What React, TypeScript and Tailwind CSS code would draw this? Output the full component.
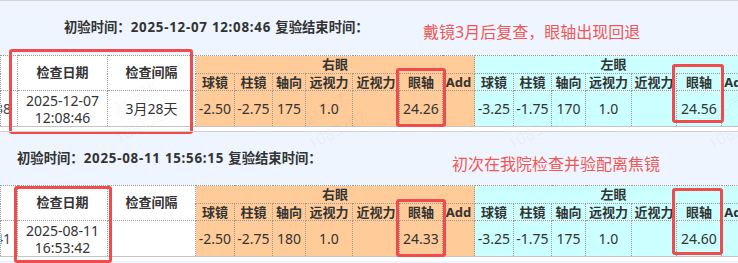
import React from "react";

// ============================================================================
// DATA
// ============================================================================

const colWidths = [
  "w-[17px]", "w-[90px]", "w-[88px]",
  "w-[39px]", "w-[38px]", "w-[33px]", "w-[47px]", "w-[47px]", "w-[43px]", "w-[32px]",
  "w-[39px]", "w-[38px]", "w-[34px]", "w-[46px]", "w-[45px]", "w-[45px]", "w-[31px]",
];

const subHeads = ["球镜", "柱镜", "轴向", "远视力", "近视力", "眼轴", "Add"];

type Visit = {
  start: string;
  date: [string, string];
  interval: string;
  prev: string;
  right: string[];
  left: string[];
  note: string;
  headClass: string;
  noteClass: string;
  boxes: string[];
  marks: { cls: string; text: string }[];
};

const visits: Visit[] = [
  {
    start: "2025-12-07 12:08:46",
    date: ["2025-12-07", "12:08:46"],
    interval: "3月28天",
    prev: "1138",
    right: ["-2.50", "-2.75", "175", "1.0", "", "24.26", ""],
    left: ["-3.25", "-1.75", "170", "1.0", "", "24.56", ""],
    note: "戴镜3月后复查，眼轴出现回退",
    headClass: "h-[54px] pl-[64px]",
    noteClass: "left-[423px] top-[22px]",
    boxes: [
      "left-[9px] top-[49px] w-[184px] h-[85px]",
      "left-[396px] top-[68px] w-[50px] h-[59px]",
      "left-[672px] top-[64px] w-[52px] h-[59px]",
    ],
    marks: [
      { cls: "left-[112px] top-[86px]", text: "赵雨涛" },
      { cls: "left-[112px] top-[112px]", text: "1083207" },
      { cls: "left-[303px] top-[96px]", text: "赵雨涛" },
      { cls: "left-[305px] top-[118px]", text: "1083207" },
      { cls: "left-[512px] top-[96px]", text: "赵雨涛" },
      { cls: "left-[505px] top-[118px]", text: "1083207" },
      { cls: "left-[712px] top-[92px]", text: "赵雨涛" },
      { cls: "left-[705px] top-[118px]", text: "1083207" },
    ],
  },
  {
    start: "2025-08-11 15:56:15",
    date: ["2025-08-11", "16:53:42"],
    interval: "",
    prev: "1141",
    right: ["-2.50", "-2.75", "180", "1.0", "", "24.33", ""],
    left: ["-3.25", "-1.75", "175", "1.0", "", "24.60", ""],
    note: "初次在我院检查并验配离焦镜",
    headClass: "h-[53px] pl-[17px]",
    noteClass: "left-[452px] top-[23px]",
    boxes: [
      "left-[14px] top-[55px] w-[98px] h-[77px]",
      "left-[396px] top-[68px] w-[50px] h-[58px]",
      "left-[672px] top-[57px] w-[51px] h-[67px]",
    ],
    marks: [],
  },
];

const cell = "border border-dotted border-[#9a9a9a] p-0 text-center align-middle";

// ============================================================================
// VISIT BLOCK — blue heading + eye table + annotations
// ============================================================================

function VisitBlock({ v }: { v: Visit }) {
  return (
    <div className="relative">
      <div className="h-px bg-[#d2d2d2]" />
      <div className={`flex items-center text-[13.33px] font-bold text-[#333] whitespace-nowrap ${v.headClass}`}>
        <span>
          初验时间：<span className="tracking-[0.75px]">{v.start} </span>复验结束时间：
        </span>
      </div>

      <table className="table-fixed border-collapse w-[752px] text-[#333] bg-white">
        <colgroup>
          {colWidths.map((w, i) => (
            <col key={i} className={w} />
          ))}
        </colgroup>
        <thead>
          <tr className="h-[18px]">
            <th rowSpan={2} className={cell} />
            <th rowSpan={2} className={`${cell} text-[13px] font-bold`}>检查日期</th>
            <th rowSpan={2} className={`${cell} text-[13px] font-bold`}>检查间隔</th>
            <th colSpan={7} className={`${cell} bg-[#ffcc99] text-[13px] font-bold leading-[17px]`}>右眼</th>
            <th colSpan={7} className={`${cell} bg-[#ccffff] text-[13px] font-bold leading-[17px]`}>左眼</th>
          </tr>
          <tr className="h-[17px]">
            {subHeads.map((h) => (
              <th key={"r" + h} className={`${cell} bg-[#ffcc99] text-[13px] font-bold leading-[16px] whitespace-nowrap`}>{h}</th>
            ))}
            {subHeads.map((h) => (
              <th key={"l" + h} className={`${cell} bg-[#ccffff] text-[13px] font-bold leading-[16px] whitespace-nowrap overflow-hidden`}>{h}</th>
            ))}
          </tr>
        </thead>
        <tbody>
          <tr className="h-[36px] text-[14px] leading-[17px] border-b border-solid border-[#c4c4c4]">
            <td className={`${cell} overflow-hidden`}>
              <div className="flex justify-end pr-[6px] whitespace-nowrap text-[#444]">{v.prev}</div>
            </td>
            <td className={cell}>
              {v.date[0]}
              <br />
              {v.date[1]}
            </td>
            <td className={cell}>{v.interval}</td>
            {v.right.map((d, i) => (
              <td key={"r" + i} className={`${cell} bg-[#ffcc99]`}>{d}</td>
            ))}
            {v.left.map((d, i) => (
              <td key={"l" + i} className={`${cell} bg-[#ccffff]`}>{d}</td>
            ))}
          </tr>
        </tbody>
      </table>
      <div className="h-[4px] bg-white" />

      {/* watermark */}
      {v.marks.map((m, i) => (
        <span
          key={i}
          className={`absolute ${m.cls} -rotate-[28deg] text-[16px] text-black/[0.045] pointer-events-none whitespace-nowrap`}
        >
          {m.text}
        </span>
      ))}

      {/* annotation */}
      <p className={`absolute ${v.noteClass} text-[16px] leading-[20px] text-[#f25757] whitespace-nowrap`}>{v.note}</p>
      {v.boxes.map((b, i) => (
        <div key={i} className={`absolute ${b} border-[3px] border-[#f24b4b] rounded-[3px] pointer-events-none`} />
      ))}
    </div>
  );
}

export default function App() {
  return (
    <div className="w-[738px] h-[263px] overflow-hidden bg-[#eef5fe] font-['Noto_Sans','Noto_Sans_CJK_SC',sans-serif]">
      {visits.map((v, i) => (
        <VisitBlock key={i} v={v} />
      ))}
    </div>
  );
}
